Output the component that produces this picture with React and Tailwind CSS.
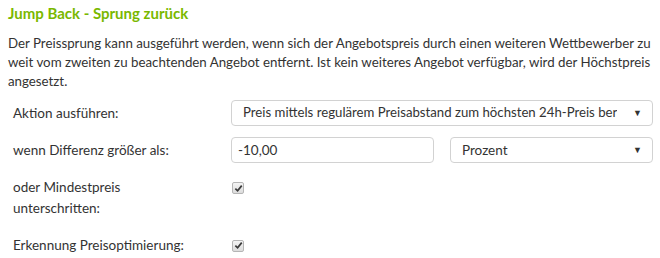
function Check() {
  return (
    <span className="flex h-[12px] w-[12px] items-center justify-center rounded-[2px] border border-[#b5b5b5] bg-gradient-to-b from-[#f4f4f4] to-[#dcdcdc]">
      <svg viewBox="0 0 10 10" className="h-[9px] w-[9px]">
        <path d="M1.5 5.2 L4 7.6 L8.6 1.8" fill="none" stroke="#3a3a3a" strokeWidth="1.9" />
      </svg>
    </span>
  );
}

function Select({ label, className }) {
  return (
    <div className={`flex h-[26px] items-center justify-between rounded-[4px] border border-[#d2d2d2] bg-white pl-[11px] pr-[10px] text-[#333] ${className}`}>
      <span className="overflow-hidden whitespace-nowrap">{label}</span>
      <span className="ml-3 shrink-0 text-[9px]">▼</span>
    </div>
  );
}

export default function App() {
  return (
    <div className="h-[258px] w-[660px] bg-white px-2 font-['Lato',sans-serif] text-[#333]">
      <h2 className="pt-[3px] text-[15px] font-bold leading-[20px] text-[#7ab800]">Jump Back - Sprung zurück</h2>
      <p className="mt-[11px] text-[13.3px] leading-[19px]">
        Der Preissprung kann ausgeführt werden, wenn sich der Angebotspreis durch einen weiteren Wettbewerber zu
        <br />
        weit vom zweiten zu beachtenden Angebot entfernt. Ist kein weiteres Angebot verfügbar, wird der Höchstpreis
        <br />
        angesetzt.
      </p>

      <div className="mt-[9px] grid grid-cols-[218px_422px] items-center gap-y-[11px] pl-[5px] text-[13.5px]">
        <label>Aktion ausführen:</label>
        <Select className="text-[13.2px]" label="Preis mittels regulärem Preisabstand zum höchsten 24h-Preis ber" />

        <label>wenn Differenz größer als:</label>
        <div className="grid grid-cols-2 gap-4">
          <div className="flex h-[26px] items-center rounded-[4px] border border-[#d2d2d2] pl-[6px]">-10,00</div>
          <Select label="Prozent" />
        </div>

        <label className="mt-[3px] w-[140px] leading-[21px]">oder Mindestpreis unterschritten:</label>
        <div className="mt-[3px] flex h-[42px] items-start pl-[1px] pt-[5px]">
          <Check />
        </div>

        <label className="mt-[5px] leading-[21px]">Erkennung Preisoptimierung:</label>
        <div className="mt-[5px] flex pl-[1px]">
          <Check />
        </div>
      </div>
    </div>
  );
}
